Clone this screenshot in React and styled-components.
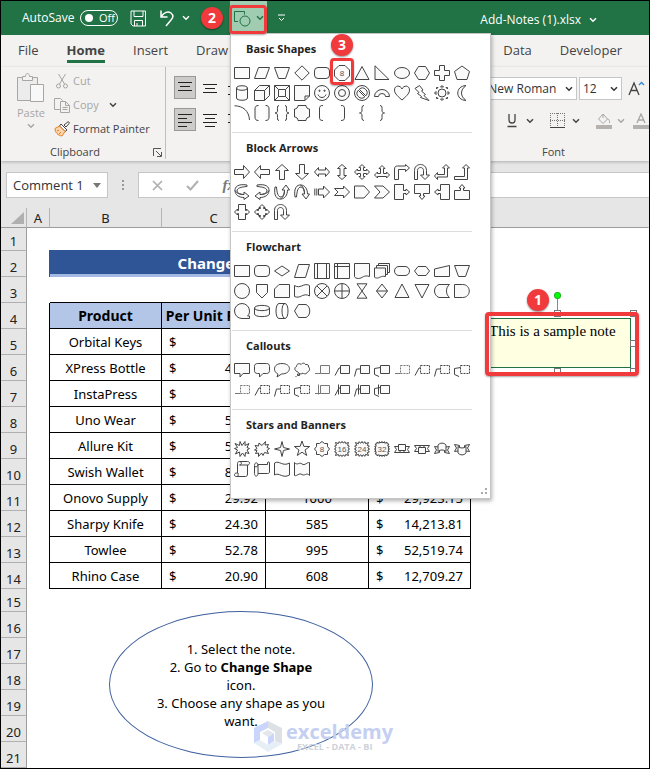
import React from "react";
import styled, { createGlobalStyle, css } from "styled-components";

const Global = createGlobalStyle`
  *, *::before, *::after { box-sizing: border-box; }
  body { margin: 0; background: #fff; }
  button, select, input { font: inherit; color: inherit; margin: 0; padding: 0; border: 0; background: none; border-radius: 0; }
  svg { display: block; flex: none; }
`;

const red = "#f03a3c";
const ui = `"Open Sans", "Noto Sans", sans-serif`;
const cellFont = `"Noto Sans", "Open Sans", sans-serif`;

const Window = styled.div`
  min-height: 100vh;
  border: 1px solid #000;
  font: 12px/16px ${ui};
  color: #444;
  background: #e6e6e6;
  overflow: hidden;
`;

/* ---------- title bar ---------- */
const TitleBar = styled.header`
  display: flex;
  align-items: center;
  height: 34px;
  padding-left: 21px;
  background: #217346;
  color: #fff;
`;
const AutoSave = styled.label`
  display: flex;
  align-items: center;
  width: 96px;
  justify-content: space-between;
  white-space: nowrap;
  font-size: 12px;
`;
const Toggle = styled.span`
  display: flex;
  align-items: center;
  gap: 6px;
  width: 38px;
  height: 16px;
  padding-left: 4px;
  border: 1px solid #fff;
  border-radius: 8px;
  font-size: 11px;
  line-height: 14px;
`;
const Knob = styled.input.attrs({ type: "checkbox" })`
  appearance: none;
  width: 8px;
  height: 8px;
  border-radius: 50%;
  background: #fff;
`;
const QuickTools = styled.div`
  display: flex;
  align-items: center;
  padding-left: 12px;
  gap: 12px;
  width: 112px;
`;
const IconButton = styled.button`
  display: flex;
  align-items: center;
  justify-content: center;
  gap: ${(p) => p.$gap || 0}px;
  color: ${(p) => (p.$muted ? "#a8a6a4" : "inherit")};
`;
const ShapeTool = styled.div`
  position: relative;
  display: flex;
  align-self: stretch;
  width: 37px;
`;
const ShapeButton = styled.button`
  display: flex;
  align-items: center;
  justify-content: center;
  gap: 5px;
  width: 100%;
  background: #a0cdb2;
  color: #217346;
`;
const FileName = styled.button`
  display: flex;
  align-items: center;
  gap: 7px;
  margin: 3px 51px 0 auto;
  font-size: 12px;
`;
const ToolMore = styled.div`
  padding-left: 10px;
`;

/* ---------- annotations ---------- */
const Highlight = styled.span`
  position: absolute;
  inset: ${(p) => p.$inset};
  border: ${(p) => p.$w || 3}px solid ${red};
  border-radius: 4px;
  box-shadow: 0 1px 2px rgba(0, 0, 0, 0.35);
  pointer-events: none;
  z-index: 6;
`;
const Badge = styled.span`
  position: absolute;
  left: ${(p) => p.$x}px;
  top: ${(p) => p.$y}px;
  width: 22px;
  height: 22px;
  border-radius: 50%;
  background: ${red};
  color: #fff;
  font: bold 14px/22px ${ui};
  text-align: center;
  box-shadow: 0 1px 2px rgba(0, 0, 0, 0.45);
  z-index: 7;
`;

/* ---------- shapes menu ---------- */
const Menu = styled.div`
  position: absolute;
  top: 32px;
  left: 0;
  width: 261px;
  padding: 0 0 0 1px;
  border: 1px solid #c6c6c6;
  background: #fff;
  box-shadow: 1px 2px 4px rgba(0, 0, 0, 0.3);
  color: #222;
  z-index: 5;
`;
const Section = styled.section`
  width: 240px;
  padding-bottom: 9px;
  border-bottom: 1px solid #dcdcdc;
  &:last-of-type { border-bottom: 0; }
`;
const SectionTitle = styled.h2`
  margin: 0;
  padding-left: 14px;
  font: bold 11px/29px ${ui};
`;
const ShapeGrid = styled.div`
  display: grid;
  grid-template-columns: repeat(12, 20px);
  grid-auto-rows: 20px;
`;
const ShapeCell = styled.button`
  position: relative;
  display: flex;
  align-items: center;
  justify-content: center;
`;
const Grip = styled.div`
  display: flex;
  justify-content: flex-end;
  height: 10px;
  padding-right: 2px;
`;

/* ---------- ribbon ---------- */
const Tabs = styled.nav`
  display: flex;
  gap: 28px;
  height: 32px;
  padding: 5px 27px 0 17px;
  background: #f3f2f1;
  font-size: 13px;
  line-height: 21px;
`;
const Tab = styled.button`
  height: 23px;
  font-weight: ${(p) => (p.$active ? "bold" : "normal")};
  border-bottom: 3px solid ${(p) => (p.$active ? "#217346" : "transparent")};
  ${(p) => p.$right && css`margin-left: auto;`}
`;
const Ribbon = styled.div`
  display: flex;
  height: 94px;
  background: #f3f2f1;
  box-shadow: 0 1px 3px rgba(0, 0, 0, 0.25);
`;
const ClipGroup = styled.div`
  display: flex;
  flex-direction: column;
  justify-content: space-between;
  width: 165px;
  height: 92px;
  padding: 2px 0 0 13px;
  border-right: 1px solid #c0bebc;
`;
const ClipTools = styled.div`
  display: flex;
  gap: 6px;
  font-size: 11px;
`;
const PasteButton = styled.button`
  display: flex;
  flex-direction: column;
  align-items: center;
  width: 34px;
  padding-top: 3px;
  color: #a8a6a4;
  gap: 2px;
`;
const ClipList = styled.div`
  display: flex;
  flex-direction: column;
`;
const ClipItem = styled.button`
  display: flex;
  align-items: center;
  gap: 3px;
  height: 24px;
  white-space: nowrap;
  color: ${(p) => (p.$muted ? "#a8a6a4" : "#444")};
  svg + span + svg { margin-left: 7px; color: #444; }
`;
const ClipFooter = styled.div`
  display: flex;
  justify-content: space-between;
  align-items: center;
  height: 14px;
  padding: 0 3px 0 36px;
  font-size: 11px;
`;
const AlignGroup = styled.div`
  display: grid;
  grid-template-columns: repeat(3, 22px);
  grid-auto-rows: 23px;
  gap: 9px 3px;
  padding: 9px 0 0 8px;
`;
const AlignButton = styled.button`
  display: flex;
  align-items: center;
  justify-content: center;
  border: 1px solid ${(p) => (p.$on ? "#9a9896" : "transparent")};
  background: ${(p) => (p.$on ? "#cdcbc9" : "none")};
`;
const FontGroup = styled.div`
  display: flex;
  flex-direction: column;
  width: 206px;
  margin-left: auto;
  padding-top: 10px;
`;
const FontRow = styled.div`
  display: flex;
  align-items: center;
  gap: ${(p) => p.$gap}px;
  height: 23px;
  ${(p) => p.$tools && css`margin-top: 9px; padding-left: 64px;`}
`;
const Picker = styled.span`
  display: grid;
  align-items: center;
  flex: none;
  width: ${(p) => p.$w}px;
  height: ${(p) => p.$h}px;
  border: 1px solid #c6c6c6;
  background: #fff;
  color: #333;
  > * { grid-area: 1 / 1; }
  > svg { justify-self: end; margin-right: ${(p) => p.$end || 3}px; pointer-events: none; }
  select { appearance: none; width: 100%; height: 100%; padding-left: ${(p) => p.$pad}px; outline: 0; }
`;
const Rule = styled.span`
  width: 1px;
  height: 20px;
  background: #d0cecc;
`;
const FontLabel = styled.div`
  padding: 12px 0 0 99px;
  font-size: 11px;
`;

/* ---------- formula bar ---------- */
const FormulaBar = styled.div`
  display: flex;
  align-items: center;
  height: 47px;
  padding: 1px 0 0 5px;
  font-size: 13px;
`;
const Dots = styled.span`
  display: flex;
  justify-content: center;
  width: 30px;
  color: #999;
`;
const FxBox = styled.div`
  display: flex;
  align-items: center;
  justify-content: space-between;
  width: 106px;
  height: 26px;
  padding: 0 8px 0 13px;
  border: 1px solid #c6c6c6;
  background: #fff;
  color: #b0b0b0;
`;
const FxInput = styled.input`
  flex: 1;
  min-width: 0;
  height: 26px;
  margin-left: 5px;
  border: solid #c6c6c6;
  border-width: 1px 0;
  background: #fff;
`;
const FxName = styled.i`
  font: italic bold 15px "Liberation Serif", serif;
  color: #777;
`;

/* ---------- sheet ---------- */
const Sheet = styled.main`
  position: relative;
  background: #fff;
  font-family: ${cellFont};
  color: #000;
`;
const Grid = styled.table`
  width: 100%;
  table-layout: fixed;
  border-collapse: separate;
  border-spacing: 0;
  font-size: 13px;
  line-height: 22px;
  td, th { padding: 0; font-weight: normal; white-space: nowrap; }
`;
const Col = styled.col`
  width: ${(p) => (p.$w ? p.$w + "px" : "auto")};
`;
const ColHead = styled.th`
  height: 20px;
  line-height: 18px;
  background: #e6e6e6;
  color: #222;
  border-right: 1px solid ${(p) => (p.$plain ? "#e6e6e6" : "#b5b5b5")};
  border-bottom: 1px solid #9c9c9c;
  svg { margin-left: 10px; }
`;
const Row = styled.tr`
  height: ${(p) => (p.$short ? 23 : 26)}px;
`;
const RowHead = styled.th`
  background: #e6e6e6;
  color: #222;
  font-size: 13px;
  line-height: 17px;
  vertical-align: bottom;
  border-right: 1px solid #9c9c9c;
  border-bottom: 1px solid #b0b0b0;
`;
const Gutter = styled.td`
  ${(p) => p.$edge && css`border-right: 1px solid #000;`}
`;
const Banner = styled.td`
  && {
    background: #2f5597;
    border-bottom: 3px solid #a3b8e4;
    box-shadow: -1px 0 #2f5597, -1px -1px #2f5597, 0 -1px #2f5597;
    color: #fff;
    font-size: 15px;
    font-weight: bold;
    text-align: center;
  }
`;
const TopEdge = styled.td`
  border-bottom: 1px solid #000;
`;
const Head = styled.th`
  && {
    background: #b4c6e7;
    border: solid #000;
    border-width: 0 1px 1px 0;
    font-weight: bold;
    font-size: 14px;
  }
`;
const Cell = styled.td`
  border: solid #000;
  border-width: 0 1px 1px 0;
  text-align: center;
`;
const Money = styled.div`
  display: flex;
  justify-content: space-between;
  padding: 0 7px;
`;

const Steps = styled.div`
  position: absolute;
  left: 108px;
  top: 403px;
  width: 264px;
  height: 147px;
  display: flex;
  flex-direction: column;
  justify-content: center;
  border: 1px solid #40619f;
  border-radius: 50%;
  text-align: center;
  font-size: 13px;
  line-height: 18px;
  p { margin: 0; }
`;
const Watermark = styled.div`
  position: absolute;
  left: 252px;
  top: 513px;
  display: flex;
  gap: 3px;
  color: #c4cff2;
`;
const Brand = styled.div`
  font: bold 20px/22px "Open Sans", sans-serif;
  small { display: block; padding-left: 11px; font: bold 9px/7px "Open Sans", sans-serif; color: #cdd2da; }
`;
const NoteArea = styled.div`
  position: absolute;
  left: 485px;
  top: 110px;
  width: 145px;
  height: 50px;
`;
const Note = styled.div`
  height: 100%;
  padding-left: 2px;
  border: 1px solid #217346;
  background: #ffffe1;
  font: 15px/24px "Liberation Serif", serif;
  white-space: nowrap;
`;
const Handle = styled.i`
  position: absolute;
  left: ${(p) => p.$x}px;
  top: ${(p) => p.$y}px;
  width: 7px;
  height: 7px;
  border: 1px solid #777;
  background: #fff;
  ${(p) => p.$rotate && css`
    background: #0f0;
    border: 1px solid #1fae1f;
    border-radius: 3px;
    &::after { content: ""; position: absolute; left: 2px; top: 6px; height: 14px; border-left: 1px solid #888; }
  `}
`;

/* ---------- drawings ---------- */
const Chevron = ({ w = 8 }) => (
  <svg width={w} height="6" viewBox="0 0 8 6" fill="none" stroke="currentColor" strokeWidth="1.5"><path d="M1 1.2l3 3 3-3" /></svg>
);

/* k pushes the outline from a circle (0) towards a square (1) */
const star = (n, R, r, k = 0) =>
  "M" + Array.from({ length: n * 2 }, (_, i) => {
    const a = (Math.PI * i) / n - Math.PI / 2;
    const sq = 1 / Math.max(Math.abs(Math.cos(a)), Math.abs(Math.sin(a)));
    const q = (i % 2 ? r : R) * (1 + k * (sq - 1));
    return `${(8 + q * Math.cos(a)).toFixed(2)} ${(8 + q * Math.sin(a)).toFixed(2)}`;
  }).join("L") + "z";

const arrow = "M.5 5.5h9v-4L15.5 8l-6 6.5v-4h-9z";
const double = "M.5 8l4-4.5v2.500h7V3.500L15.500 8l-4 4.500V10h-7v2.500z";
const uturn = "M.5 15.500V6.500c0-8 12-8 12 0v4.500h3l-4.500 4.500L6.500 11h3V6.500c0-4-6-4-6 0v9z";
const bentUp = "M.5 12.500h10v-8.500H8.500L12 .5l3.500 3.500h-2v11.500H.5z";
const curved = "M13 1C4-.5.5 3 1 7c.3 4 4 6.500 9 6.500v2l5-3.500-5-4v2.500C6 10.500 3.500 9.500 3 7c0-3 4-4 10-4.500zM1 6.500c1 2.500 5 4 9 4";
const quad = "M8 .5l3 3H9.500v3h3V5l3 3-3 3V9.500h-3v3H11l-3 3-3-3h1.500v-3h-3V11l-3-3 3-3v1.500h3v-3H5z";
const calloutBox = "M6.500 3.500h9v8h-9z";
const leads = ["M1 11.500h5.500", "M1 13.500l4-7.500h1.500", "M.5 14.500l2-7.500h4", "M5 14.500l-4.500-2V6.500l6-1"];

const basic = [
  ["Rectangle", "M.5 2.500h15v11H.5z"],
  ["Parallelogram", "M4.500 2.500h11l-4 11H.5z"],
  ["Trapezoid", "M.5 2.500h15l-4 11h-7z"],
  ["Diamond", "M8 .8L15.200 8 8 15.200.8 8z"],
  ["Rounded rectangle", "M4 2.500h8a3.500 3.500 0 0 1 3.500 3.500v4a3.500 3.500 0 0 1-3.500 3.500H4A3.500 3.500 0 0 1 .5 10V6A3.500 3.500 0 0 1 4 2.500z"],
  ["Octagon", "M5 .5h6L15.500 5v6L11 15.500H5L.5 11V5z", { n: 8 }],
  ["Triangle", "M8 1.500l7 13H1z"],
  ["Right triangle", "M1 .8v13.700h14z"],
  ["Oval", "M.5 8a7.500 5.500 0 1 0 15 0 7.500 5.500 0 1 0-15 0z"],
  ["Hexagon", "M4.500 1.500h7L15.500 8l-4 6.500h-7L.5 8z"],
  ["Cross", "M5.500.5h5v5h5v5h-5v5h-5v-5h-5v-5h5z"],
  ["Pentagon", "M8 1l7.500 5.500-2.500 8H3l-2.500-8z"],
  ["Can", "M2.500 3v10c0 3 11 3 11 0V3c0-3-11-3-11 0 0 3 11 3 11 0"],
  ["Cube", "M.5 5.500l5-5h10v10l-5 5H.5zM.5 5.500h10v10M10.500 5.500l5-5"],
  ["Bevel", "M.5.5h15v15H.5zM4.500 4.500h7v7h-7zM.5.5l4 4M15.500.5l-4 4M.5 15.500l4-4M15.500 15.500l-4-4"],
  ["Folded corner", "M.5.5h15V11L11 15.500H.5zM11 15.500V11h4.500"],
  ["Smiley face", "M.5 8a7.500 7.500 0 1 0 15 0 7.500 7.500 0 1 0-15 0zM4 9.500c1.500 4 6.500 4 8 0M5 5.200h1v1H5zM10 5.200h1v1h-1z"],
  ["Donut", "M.5 8a7.500 7.500 0 1 0 15 0 7.500 7.500 0 1 0-15 0zM4.500 8a3.500 3.500 0 1 0 7 0 3.500 3.500 0 1 0-7 0z"],
  ["No symbol", "M.5 8a7.500 7.500 0 1 0 15 0 7.500 7.500 0 1 0-15 0zM4.300 5.300a4.600 4.600 0 0 0 6.500 6.500zM5.300 4.300a4.600 4.600 0 0 1 6.500 6.500z"],
  ["Block arc", "M.5 11.500a7.500 7 0 0 1 15 0h-4a3.500 3 0 0 0-7 0z"],
  ["Heart", "M8 15C2 10 .5 7.500.5 5 .5 0 6.500 0 8 4c1.500-4 7.500-4 7.500 1C15.500 7.500 14 10 8 15z"],
  ["Lightning bolt", "M5.500.5L1 3.500l4 4-1.500 1 4 3L6.500 12.500l8.500 3-5-5 1.500-1-4-3.500L9 5z"],
  ["Sun", "M4 8a4 4 0 1 0 8 0 4 4 0 1 0-8 0zM6.500 2L8 .5 9.500 2zM6.500 14L8 15.500 9.500 14zM2 6.500L.5 8 2 9.500zM14 6.500L15.500 8 14 9.500zM2.500 4V2.500H4zM12 2.500h1.500V4zM2.500 12v1.500H4zM12 13.500h1.500V12z"],
  ["Moon", "M12 .5C1 1 1 15 12 15.500 6 11 6 5 12 .5z"],
  ["Arc", "M.5.8C9 .8 15 6 15.500 15", { open: 1 }],
  ["Double bracket", "M4.500.5C2 .5 1 1.500 1 4v8c0 2.500 1 3.500 3.500 3.500M11.500.5C14 .5 15 1.500 15 4v8c0 2.500-1 3.500-3.500 3.500"],
  ["Double brace", "M5 .5C3 .5 3.500 3 3.500 5c0 2-.5 3-2.500 3 2 0 2.500 1 2.500 3 0 2-.5 4.500 1.500 4.500M11 .5c2 0 1.500 2.500 1.500 4.500 0 2 .5 3 2.500 3-2 0-2.500 1-2.500 3 0 2 .5 4.500-1.500 4.500"],
  ["Plaque", "M4 .5h8c0 2 1.500 3.500 3.500 3.500v8c-2 0-3.500 1.500-3.500 3.500H4c0-2-1.500-3.500-3.500-3.500V4C2.500 4 4 2.500 4 .5z"],
  ["Left bracket", "M9 .5C6 .5 5.500 1.500 5.500 4v8c0 2.500.5 3.500 3.500 3.500", { open: 1 }],
  ["Right bracket", "M7 .5c3 0 3.500 1 3.500 3.500v8c0 2.500-.5 3.500-3.500 3.500", { open: 1 }],
  ["Left brace", "M10 .5C7.500.5 8 3 8 5c0 2-.5 3-2.500 3C7.500 8 8 9 8 11c0 2-.5 4.500 2 4.500", { open: 1 }],
  ["Right brace", "M6 .5C8.500.5 8 3 8 5c0 2 .5 3 2.500 3C8.500 8 8 9 8 11c0 2 .5 4.500-2 4.500", { open: 1 }],
];

const arrows = [
  ["Right arrow", arrow],
  ["Left arrow", arrow, { r: 180 }],
  ["Up arrow", arrow, { r: 270 }],
  ["Down arrow", arrow, { r: 90 }],
  ["Left-right arrow", double],
  ["Up-down arrow", double, { r: 90 }],
  ["Quad arrow", quad],
  ["Left-right-up arrow", "M8 1.500l3 3H9.500v5h3V8l3 3-3 3v-1.500h-9V14l-3-3 3-3v1.500h3v-5H5z"],
  ["Bent arrow", "M.5 15.500V5c0-2 1-3 3-3h8V.5l4 3.500-4 3.500V5.500h-7v10z"],
  ["U-turn arrow", uturn],
  ["Left-up arrow", "M.5 12l3-3.500v2h7V4H8.500L12 .5 15.500 4h-2v9H3.500v2.500z"],
  ["Bent-up arrow", bentUp],
  ["Curved right arrow", curved],
  ["Curved left arrow", curved, { f: 1 }],
  ["Curved up arrow", curved, { r: 270 }],
  ["Curved down arrow", curved, { r: 90, fy: 1 }],
  ["Striped arrow", "M.8 4.500v7M2.800 4.500v7M4.500 5h5V2l6 6-6 6v-3h-5z"],
  ["Notched arrow", "M.5 4.500h9V2l6 6-6 6v-2.500h-9L4 8z"],
  ["Pentagon arrow", "M.5 2h9.500l5.500 6-5.500 6H.5z"],
  ["Chevron arrow", "M.5 2H9l6.500 6L9 14H.5L6 8z"],
  ["Right arrow callout", "M.5.5h9v6h2.500V5l3.500 3-3.500 3V9.500H9.500v6h-9z"],
  ["Down arrow callout", "M.5.5h9v6h2.500V5l3.500 3-3.500 3V9.500H9.500v6h-9z", { r: 90 }],
  ["Left arrow callout", "M.5.5h9v6h2.500V5l3.500 3-3.500 3V9.500H9.500v6h-9z", { r: 180 }],
  ["Up arrow callout", "M.5.5h9v6h2.500V5l3.500 3-3.500 3V9.500H9.500v6h-9z", { r: 270 }],
  ["Left-right arrow callout", "M.5 8L3.500 5v1.500h1v-6h7v6h1V5l3 3-3 3V9.500h-1v6h-7v-6h-1V11z"],
  ["Quad arrow callout", "M8 .5l3 3H9.500v1h2v2h1V5l3 3-3 3V9.500h-1v2h-2v1H11l-3 3-3-3h1.500v-1h-2v-2h-1V11l-3-3 3-3v1.500h1v-2h2v-1H5z"],
  ["Circular arrow", uturn],
];

const flow = [
  ["Process", "M.5 2.500h15v11H.5z"],
  ["Alternate process", basic[4][1]],
  ["Decision", "M8 3l7.500 5L8 13 .5 8z"],
  ["Data", "M4.500 1.500h11l-4 13H.5z"],
  ["Predefined process", "M.5.5h15v15H.5zM3.500.5v15M12.500.5v15"],
  ["Internal storage", "M.5.5h15v15H.5zM3.500.5v15M.5 3.500h15"],
  ["Document", "M.5.5h15v13c-6-2-7 2-11 2-2 0-4-1-4-2z"],
  ["Multidocument", "M4.500 3V.5h11v9h-2M2.500 5V2.500h11v9h-2M.5 5h11v8.500c-5-1-6 2-9 1.500-1 0-2-.5-2-1z"],
  ["Terminator", "M5 3.500h6c6 0 6 9 0 9H5c-6 0-6-9 0-9z"],
  ["Preparation", "M4 3.500h8L15.500 8 12 12.500H4L.5 8z"],
  ["Manual input", "M.5 6l15-3.500v11H.5z"],
  ["Manual operation", "M.5 2.500h15l-4 11h-7z"],
  ["Connector", "M.5 8a7.500 7.500 0 1 0 15 0 7.500 7.500 0 1 0-15 0z"],
  ["Off-page connector", "M2.500 1.500h11v8L8 15 2.500 9.500z"],
  ["Card", "M5 1.500h10.500v13H.5V6z"],
  ["Punched tape", "M.5 2.500c3 2 5 1 7 .5 3-1.500 6-2 8-.5v10.500c-3-2-5-1-7-.5-3 2-6 2-8 1z"],
  ["Summing junction", "M.5 8a7.500 7.500 0 1 0 15 0 7.500 7.500 0 1 0-15 0zM3 3l10 10M13 3L3 13"],
  ["Or", "M.5 8a7.500 7.500 0 1 0 15 0 7.500 7.500 0 1 0-15 0zM8 .5v15M.5 8h15"],
  ["Collate", "M3 .8h10L3 15.200h10z"],
  ["Sort", "M8 1l5.500 7L8 15 2.500 8zM2.500 8h11"],
  ["Extract", "M8 1l7 13.500H1z"],
  ["Merge", "M1 1.500h14L8 15z"],
  ["Stored data", "M5 1.500h10.500c-4 3-4 10 0 13H5c-6-2-6-11 0-13z"],
  ["Delay", "M.5 1.500h8c9 0 9 13 0 13h-8z"],
  ["Sequential storage", "M15.500 15.500H8A7.500 7.500 0 1 1 15.500 8c0 3-1 4-2 5h2z"],
  ["Magnetic disk", "M.5 5v6c0 3.500 15 3.500 15 0V5c0-3.500-15-3.500-15 0 0 3.500 15 3.500 15 0"],
  ["Direct access storage", "M5 .5h6c4 0 4 15 0 15H5c-4 0-4-15 0-15zM11 .5c-4 0-4 15 0 15"],
  ["Display", "M.5 8l4-6.500h7.500c5 2 5 11 0 13H4.500z"],
];

const lines = (suffix, opts) => leads.map((l, i) => [`Line callout ${i + 1}${suffix}`, calloutBox, { ...opts, lead: l, soft: i === 0 }]);
const callouts = [
  ["Rectangular callout", "M.5 1.500h15v10H9L6 15v-3.500H.5z"],
  ["Rounded callout", "M3.500 1.500h9c2 0 3 1 3 3v4c0 2-1 3-3 3H9L5.500 15v-3.500h-2c-2 0-3-1-3-3v-4c0-2 1-3 3-3z"],
  ["Oval callout", "M4 12L3 15l4.500-3C18 12 18 1.500 8 1.500-1.500 1.500-1 10 4 12z"],
  ["Cloud callout", "M3 9.500C0 8.500.5 5 2.500 4.500 2.500 1.500 6 1 7 2.500c1.500-2 4-1.500 4.500 0C14 2 15 3.500 14.500 5c2 1.500 1 4.500-1 5-1 2.500-4 2-4.500 1-1.500 1.500-4 1-4.500-.5zM3.500 12h2v1.500h-2zM1.500 14.500h1"],
  ...lines("", {}),
  ...lines(" (accent bar)", { dash: 1 }),
  ...lines(" (no border)", { dash: 1 }),
  ...lines(" (border and accent bar)", { bar: 1 }),
];

const ribbon = "M4.500 5.500h-4l2 3-2 3H6v-2M11.500 5.500h4l-2 3 2 3H10v-2M4.500 3.500h7v6h-7zM6 11.500h4";
const curvedRibbon = "M4 6l-3.500-.5 2 3.500-2 3.500 5-1V9.500M12 6l3.500-.5-2 3.500 2 3.500-5-1V9.500M4 4c2-2.500 6-2.500 8 0v6.500c-2-2-6-2-8 0z";
const stars = [
  ["Explosion 1", "M8 4.500L11 .5v4l4-2-2 4 2.500 1-2.500 1.500 2 3.500-3.500-1L11 15.500l-2.500-3.500L6 15.500 5.500 11 1.500 13l2-4-3-1.500 3-1L1 2.500l4.500 2 .5-4z"],
  ["Explosion 2", "M8 4.500L11.500.5 11 4l3.500-.5-1.500 3 2.500 1L13 9.500l1.500 3-4-1L9 14.500 7.500 12l-3 3.500L4.500 12l-3 .5 1.500-3-2.500-.5L3 7.500 1 4.500l3.500.5.5-3z"],
  ["4-point star", star(4, 7.5, 2.2).replace(/^.*$/, "M8 .5l1.500 6 6 1.500-6 1.500-1.500 6-1.500-6L.5 8l6-1.500z")],
  ["5-point star", star(5, 8, 3.2)],
  ["8-point star", "M8 .5l2.500 2h3v3L15.500 8l-2 2.500v3h-3L8 15.500l-2.500-2h-3v-3L.5 8l2-2.500v-3h3z", { n: 8 }],
  ["16-point star", star(16, 7.6, 6, 0.5), { n: 16 }],
  ["24-point star", star(16, 7.6, 5.800, 0.5), { n: 24 }],
  ["32-point star", star(20, 7.6, 6, 0.5), { n: 32 }],
  ["Up ribbon", ribbon],
  ["Down ribbon", ribbon, { r: 180 }],
  ["Curved up ribbon", curvedRibbon],
  ["Curved down ribbon", curvedRibbon, { r: 180 }],
  ["Vertical scroll", "M3.500 12V2.500c0-1 .5-2 2-2h8c3 0 2.500 3.500 0 3.500v9c0 1.500-.5 2.500-2 2.500h-9c-3 0-2.500-3.500 0-3.500zM5.500.5c2.500 0 2.500 3.500 0 3.500h8M2.500 15.500c1.500 0 2-1 1.500-3.500"],
  ["Horizontal scroll", "M4 3.500h9.500V2c0-1.500 2-1.500 2 0v9c0 1-.5 1.500-2 1.500H4c0 3.500-3.500 3.500-3.500 0v-8C.5 1 4 1 4 4zM4 4v8.500M.5 5C1 6.500 3.500 6 4 4"],
  ["Wave", "M.5 2c5-3 8 4 15 0v12c-7 4-10-3-15 0z"],
  ["Double wave", "M.5 1.500c3 3.500 5-1 7.500 1.500 3 2 5-2 7.500-1.500v13c-3-3.500-5 1-7.500-1-3-2-5 2-7.500 1z"],
];

const groups = [
  ["Basic Shapes", basic],
  ["Block Arrows", arrows],
  ["Flowchart", flow],
  ["Callouts", callouts],
  ["Stars and Banners", stars],
];

function Shape({ d, o = {} }) {
  const t = [(o.f || o.fy) && "translate(16 0) scale(-1 1)", o.r && `rotate(${o.r} 8 8)`].filter(Boolean).join(" ");
  return (
    <svg width="16" height="16" viewBox="0 0 16 16" overflow="visible" stroke={o.soft ? "#777" : "#444"} fill={o.open ? "none" : "#fafafa"}>
      <g transform={t || undefined}>
        <path d={d} strokeDasharray={o.dash ? "2 1" : undefined} />
        {o.lead && <path d={o.lead} fill="none" />}
        {o.bar && <path d="M4.500 2.500v10" fill="none" />}
      </g>
      {o.n && <text x="8" y="11" fontSize="8" textAnchor="middle" stroke="none" fill="#555" fontFamily="Liberation Sans">{o.n}</text>}
    </svg>
  );
}

const TextLines = ({ d }) => <svg width="14" height="14" viewBox="0 0 14 14" stroke="#222" fill="none"><path d={d} /></svg>;

const products = [
  ["Orbital Keys", "9.25"], ["XPress Bottle", "45.25"], ["InstaPress", "9.50"], ["Uno Wear", "52.10"],
  ["Allure Kit", "54.60"], ["Swish Wallet", "83.40"], ["Onovo Supply", "29.92", "1000", "29,923.15"],
  ["Sharpy Knife", "24.30", "585", "14,213.81"], ["Towlee", "52.78", "995", "52,519.74"], ["Rhino Case", "20.90", "608", "12,709.27"],
];

const Amount = ({ children }) => <Money><span>$</span><span>{children}</span></Money>;

function SheetRow({ n }) {
  const item = products[n - 5];
  let cells = <><Gutter /><td colSpan={5} /></>;
  if (n === 2) cells = <><Gutter /><Banner colSpan={4}>Change Shape of Note</Banner><td /></>;
  if (n === 3) cells = <><Gutter /><TopEdge colSpan={4} /><td /></>;
  if (n === 4) cells = <><Gutter $edge /><Head>Product</Head><Head>Per Unit Price</Head><Head /><Head /><td /></>;
  if (item) cells = (
    <>
      <Gutter $edge />
      <Cell>{item[0]}</Cell>
      <Cell><Amount>{item[1]}</Amount></Cell>
      <Cell>{item[2]}</Cell>
      <Cell>{item[3] && <Amount>{item[3]}</Amount>}</Cell>
      <td />
    </>
  );
  return <Row $short={n === 1 || n === 15}><RowHead scope="row">{n}</RowHead>{cells}</Row>;
}

export default function App() {
  return (
    <Window>
      <Global />
      <TitleBar>
        <AutoSave>AutoSave<Toggle><Knob aria-label="AutoSave" />Off</Toggle></AutoSave>
        <QuickTools>
          <IconButton aria-label="Save">
            <svg width="17" height="17" viewBox="0 0 17 17" fill="none" stroke="#fff"><path d="M1 1h14.500v15H3L1 14zM4 1v5.500h9V1M4.500 16v-5.500h8V16M7 13v3" /></svg>
          </IconButton>
          <IconButton aria-label="Undo" $gap={5}>
            <svg width="18" height="18" viewBox="0 0 18 18" fill="none" stroke="#fff" strokeWidth="1.5"><path d="M2 1.500V8h6.500M2 8c3-5 7-6 10-4 3 2.500 2 5 0 7l-5 6" /></svg>
            <Chevron />
          </IconButton>
        </QuickTools>
        <ShapeTool>
          <ShapeButton aria-label="Change Shape" aria-expanded="true">
            <svg width="17" height="17" viewBox="0 0 17 17" fill="none" stroke="currentColor"><path d="M4 11.500H.5V1.500h10v3" /><circle cx="11" cy="11" r="5" /></svg>
            <Chevron />
          </ShapeButton>
          <Highlight $inset="4px 0 1px -1px" />
          <Badge $x={-29} $y={6}>2</Badge>
          <Menu>
            {groups.map(([title, shapes]) => (
              <Section key={title}>
                <SectionTitle>{title}</SectionTitle>
                <ShapeGrid>
                  {shapes.map(([label, d, o]) => (
                    <ShapeCell key={label} aria-label={label}>
                      <Shape d={d} o={o} />
                      {label === "Octagon" && <><Highlight $inset="-5px -2px -2px -2px" /><Badge $x={-1} $y={-29}>3</Badge></>}
                    </ShapeCell>
                  ))}
                </ShapeGrid>
              </Section>
            ))}
            <Grip><svg width="8" height="8" viewBox="0 0 8 8" fill="#aaa"><path d="M5 0h2v2H5zM5 4h2v2H5zM1 4h2v2H1z" /></svg></Grip>
          </Menu>
        </ShapeTool>
        <ToolMore>
          <IconButton aria-label="Customize toolbar"><svg width="9" height="8" viewBox="0 0 9 8" fill="none" stroke="#fff"><path d="M1 1h7M2 4l2.500 2.500L7 4" /></svg></IconButton>
        </ToolMore>
        <FileName>Add-Notes (1).xlsx <Chevron w={10} /></FileName>
      </TitleBar>

      <Tabs>
        <Tab>File</Tab><Tab $active>Home</Tab><Tab>Insert</Tab><Tab>Draw</Tab>
        <Tab $right>Data</Tab><Tab>Developer</Tab>
      </Tabs>
      <Ribbon>
        <ClipGroup>
          <ClipTools>
            <PasteButton>
              <svg width="28" height="31" viewBox="0 0 28 31" fill="#ececec" stroke="#a8a6a4"><path d="M.5 5.500h20v23H.5z" /><path fill="#f3f2f1" d="M5.500 8.500v-4h3c0-4 4-4 4 0h3v4z" /><path fill="#f8f8f8" d="M13.500 12.500h13v17h-13z" /></svg>
              Paste
              <Chevron />
            </PasteButton>
            <ClipList>
              <ClipItem $muted>
                <svg width="16" height="16" viewBox="0 0 16 16" fill="none" stroke="#a8a6a4"><path d="M4.500 1l6 10M11.500 1l-6 10" /><circle cx="4.500" cy="13" r="2" /><circle cx="11.500" cy="13" r="2" /></svg>
                <span>Cut</span>
              </ClipItem>
              <ClipItem $muted>
                <svg width="16" height="16" viewBox="0 0 16 16" fill="#f3f2f1" stroke="#a8a6a4"><path d="M.5 1.500h6l2 2v9h-8z" /><path d="M6.500 4.500h5l4 4v7h-9zM11.500 4.500v4h4M8.500 10.500h5M8.500 12.500h5" /></svg>
                <span>Copy</span><Chevron />
              </ClipItem>
              <ClipItem>
                <svg width="16" height="16" viewBox="0 0 16 16" fill="#fff" stroke="#444"><path d="M14 .8c1.500 0 1.500 1 .8 2L12 6l-2-2z" /><path d="M7 3l6 6-2 1.500L5.500 5z" /><path stroke="#e87d1e" fill="#fbd5b0" d="M5.500 5L1 7.500c0 4 3 7 7 7.500l3-4.500zM3 10l2-1M5 13l2-2" /></svg>
                <span>Format Painter</span>
              </ClipItem>
            </ClipList>
          </ClipTools>
          <ClipFooter>Clipboard
            <IconButton aria-label="Clipboard options"><svg width="9" height="9" viewBox="0 0 9 9" fill="none" stroke="#555"><path d="M8 .5H.5V8M3 3l5 5M8.500 4v4.500H4" /></svg></IconButton>
          </ClipFooter>
        </ClipGroup>
        <AlignGroup>
          <AlignButton $on aria-label="Top align"><TextLines d="M0 1.500h14M2 5.500h10M0 9.500h14" /></AlignButton>
          <AlignButton aria-label="Middle align"><TextLines d="M0 3.500h14M2 7.500h10M0 11.500h14" /></AlignButton>
          <AlignButton aria-label="Bottom align"><TextLines d="M0 5.500h14M2 9.500h10M0 13.500h14" /></AlignButton>
          <AlignButton $on aria-label="Align left"><TextLines d="M0 1.500h14M0 5.500h9M0 9.500h14M0 13.500h9" /></AlignButton>
          <AlignButton aria-label="Center"><TextLines d="M0 1.500h14M2 5.500h10M0 9.500h14M2 13.500h10" /></AlignButton>
          <AlignButton aria-label="Align right"><TextLines d="M0 1.500h14M5 5.500h9M0 9.500h14M5 13.500h9" /></AlignButton>
        </AlignGroup>
        <FontGroup>
          <FontRow $gap={2}>
            <Picker $w={134} $h={23} $pad={8}><select aria-label="Font" defaultValue="t"><option value="t">Times New Roman</option></select><Chevron /></Picker>
            <Picker $w={43} $h={23} $pad={3}><select aria-label="Font size" defaultValue="12"><option>12</option></select><Chevron /></Picker>
            <IconButton aria-label="Increase font size">
              <svg width="22" height="18" viewBox="0 0 22 18" fill="none" stroke="#444" strokeWidth="1.3"><path d="M5 15L10 3l5 12M7 10.500h6" /><path stroke="#2b88d8" d="M15 5l2.500-2.500L20 5" /></svg>
            </IconButton>
          </FontRow>
          <FontRow $gap={8} $tools>
            <IconButton aria-label="Underline" $gap={9}><svg width="10" height="15" viewBox="0 0 10 15" fill="none" stroke="#444" strokeWidth="1.300"><path d="M2 1v6c0 4 6 4 6 0V1M.5 13.500h9" /></svg><Chevron /></IconButton>
            <Rule />
            <IconButton aria-label="Borders" $gap={7}><svg width="15" height="15" viewBox="0 0 15 15" fill="none" stroke="#777"><path strokeDasharray="1 1" d="M0 .5h15M0 7.500h15M.5 0v14M7.500 0v14M14.500 0v14" /><path stroke="#444" d="M0 14.500h15" /></svg><Chevron /></IconButton>
            <Rule />
            <IconButton aria-label="Fill color" $gap={5} $muted><svg width="16" height="16" viewBox="0 0 16 16" fill="none" stroke="#a8a6a4"><path d="M7 1L2.500 6 7 10.500 11.500 6zM7 1v4M11.500 6c2 0 2 2 2 4" /><path fill="#b5b1ae" stroke="none" d="M0 12h16v4H0z" /></svg><Chevron /></IconButton>
            <IconButton aria-label="Font color" $muted><svg width="16" height="16" viewBox="0 0 16 16" fill="none" stroke="#a8a6a4" strokeWidth="1.300"><path d="M4 10L8 1l4 9M5.500 7h5" /><path fill="#b5b1ae" stroke="none" d="M0 12h16v4H0z" /></svg></IconButton>
          </FontRow>
          <FontLabel>Font</FontLabel>
        </FontGroup>
      </Ribbon>

      <FormulaBar>
        <Picker $w={102} $h={26} $pad={6} $end={6}>
          <select aria-label="Name box" defaultValue="c"><option value="c">Comment 1</option></select>
          <svg width="8" height="5" viewBox="0 0 8 5" fill="#777"><path d="M0 0h8L4 5z" /></svg>
        </Picker>
        <Dots><svg width="2" height="11" viewBox="0 0 2 11" fill="currentColor"><path d="M0 0h2v2H0zM0 4h2v2H0zM0 8h2v2H0z" /></svg></Dots>
        <FxBox>
          <IconButton aria-label="Cancel"><svg width="11" height="11" viewBox="0 0 11 11" fill="none" stroke="currentColor" strokeWidth="1.700"><path d="M1 1l9 9M10 1l-9 9" /></svg></IconButton>
          <IconButton aria-label="Enter"><svg width="13" height="11" viewBox="0 0 13 11" fill="none" stroke="currentColor" strokeWidth="2"><path d="M1 6l3.500 3.500L12 1" /></svg></IconButton>
          <FxName>fx</FxName>
        </FxBox>
        <FxInput aria-label="Formula bar" />
      </FormulaBar>

      <Sheet>
        <Grid>
          <colgroup><Col $w={26} /><Col $w={23} /><Col $w={112} /><Col $w={104} /><Col $w={103} /><Col $w={102} /><Col /></colgroup>
          <thead>
            <tr>
              <ColHead aria-label="Select all"><svg width="13" height="12" viewBox="0 0 13 12" fill="#b0b0b0"><path d="M13 0v12H0z" /></svg></ColHead>
              <ColHead>A</ColHead><ColHead>B</ColHead><ColHead>C</ColHead><ColHead>D</ColHead><ColHead>E</ColHead><ColHead $plain />
            </tr>
          </thead>
          <tbody>{Array.from({ length: 21 }, (_, i) => <SheetRow key={i} n={i + 1} />)}</tbody>
        </Grid>
        <Steps>
          <p>1. Select the note.</p>
          <p>2. Go to <b>Change Shape</b><br />icon.</p>
          <p>3. Choose any shape as you<br />want.</p>
        </Steps>
        <Watermark>
          <svg width="30" height="32" viewBox="0 0 30 32"><path fill="#c9d5fb" d="M15 0L1 7v15l6-3v-8l8-4z" /><path fill="#dde1e6" d="M15 0l14 7v16l-7-3v-9l-7-4z" /><path fill="#e6eff5" d="M1 22l14 9 14-8-7-3-7 4-8-5z" /><path fill="#c9d5fb" d="M15 16l6-4v8l-6 4z" /><path fill="#e3e6ec" d="M9 12l6-3 6 3-6 4z" /></svg>
          <Brand>exceldemy<small>EXCEL - DATA - BI</small></Brand>
        </Watermark>
        <NoteArea>
          <Note>This is a sample note</Note>
          <Handle $rotate $x={68} $y={-26} />
          <Handle $x={68} $y={-8} /><Handle $x={144} $y={-8} /><Handle $x={144} $y={22} />
          <Handle $x={68} $y={50} /><Handle $x={144} $y={50} />
          <Highlight $inset="-6px -8px -8px -1px" $w={4} />
          <Badge $x={41} $y={-29}>1</Badge>
        </NoteArea>
      </Sheet>
    </Window>
  );
}
